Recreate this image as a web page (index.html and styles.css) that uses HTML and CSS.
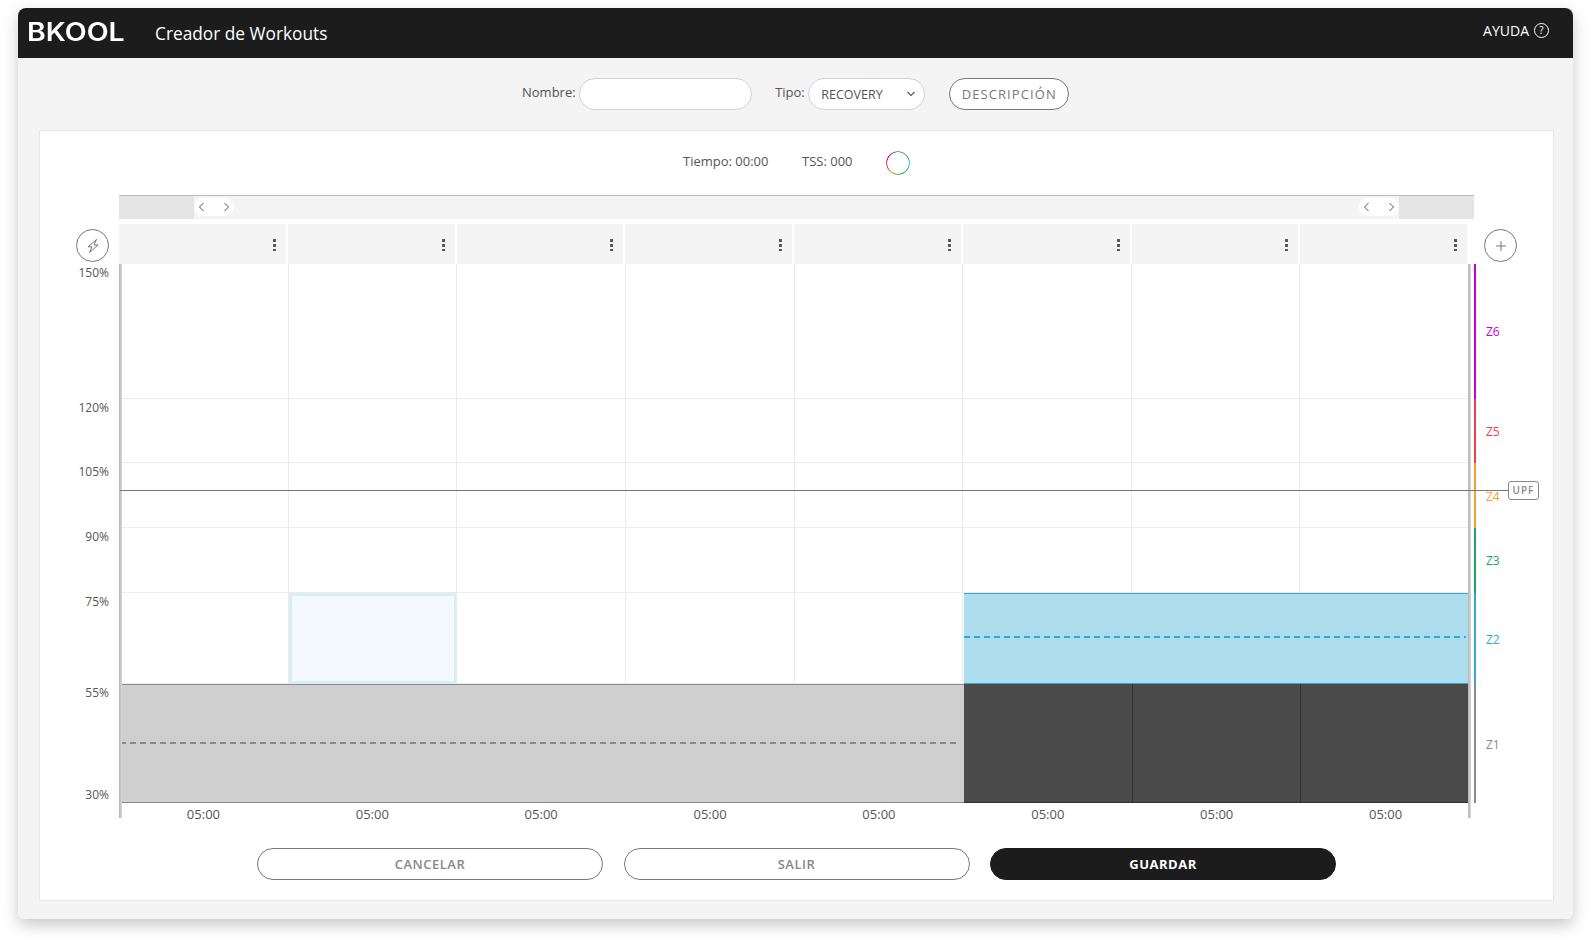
FILE: index.html
```html
<!DOCTYPE html>
<html lang="es">
<head>
  <meta charset="UTF-8">
  <title>Creador de Workouts</title>
  <link rel="stylesheet" href="styles.css">
</head>
<body>

  <div class="window">
    <header class="topbar">
      <span class="logo">BKOOL</span>
      <span class="app-title">Creador de Workouts</span>
      <a class="help">AYUDA <span class="help-icon">?</span></a>
    </header>

    <form class="toolbar">
      <label class="field-label" for="name">Nombre:</label>
      <input class="name-input" type="text" id="name">
      <label class="field-label type-label" for="type">Tipo:</label>
      <div class="type-select" id="type">
        RECOVERY
        <svg width="10" height="6" viewBox="0 0 10 6"><path d="M1.5 1 5 4.5 8.5 1" fill="none" stroke="#555" stroke-width="1.1"/></svg>
      </div>
      <button class="desc-btn" type="button">DESCRIPCIÓN</button>
    </form>

    <main class="card">
      <div class="stats">
        <span>Tiempo: 00:00</span>
        <span class="tss">TSS: 000</span>
        <span class="ring"></span>
      </div>

      <div class="scroller">
        <div class="scroll-window">
          <span class="handle handle-left">
            <svg width="7" height="10" viewBox="0 0 7 10"><path d="M5.5 1 1.5 5l4 4" fill="none" stroke="#555" stroke-width="1"/></svg>
            <svg width="7" height="10" viewBox="0 0 7 10"><path d="M1.5 1l4 4-4 4" fill="none" stroke="#555" stroke-width="1"/></svg>
          </span>
          <span class="handle handle-right">
            <svg width="7" height="10" viewBox="0 0 7 10"><path d="M5.5 1 1.5 5l4 4" fill="none" stroke="#555" stroke-width="1"/></svg>
            <svg width="7" height="10" viewBox="0 0 7 10"><path d="M1.5 1l4 4-4 4" fill="none" stroke="#555" stroke-width="1"/></svg>
          </span>
        </div>
      </div>

      <div class="head-row">
        <div class="gutter">
          <button class="round-btn" type="button">
            <svg width="18" height="18" viewBox="0 0 18 18"><path d="M12.5 2.5 4 9.8h4L5.5 15.5 14 8h-4z" fill="none" stroke="#777" stroke-width="1"/></svg>
          </button>
        </div>
        <div class="col-heads">
          <div class="col-head"><span class="dots"></span></div>
          <div class="col-head"><span class="dots"></span></div>
          <div class="col-head"><span class="dots"></span></div>
          <div class="col-head"><span class="dots"></span></div>
          <div class="col-head"><span class="dots"></span></div>
          <div class="col-head"><span class="dots"></span></div>
          <div class="col-head"><span class="dots"></span></div>
          <div class="col-head"><span class="dots"></span></div>
        </div>
        <button class="round-btn add-btn" type="button">
          <svg width="12" height="12" viewBox="0 0 12 12"><path d="M6 1v10M1 6h10" stroke="#777" stroke-width="1"/></svg>
        </button>
      </div>

      <div class="chart-row">
        <div class="y-labels">
          <span class="y-label">150%</span>
          <span class="y-label">120%</span>
          <span class="y-label">105%</span>
          <span class="y-label">90%</span>
          <span class="y-label">75%</span>
          <span class="y-label y-bottom">55%</span>
          <span class="y-label y-bottom y-last">30%</span>
        </div>

        <div class="plot">
          <!-- horizontal lines -->
          <div class="h-line r1"></div>
          <div class="h-line r2"></div>
          <div class="h-line r3"></div>
          <div class="h-line r4"></div>
          <div class="h-line r5"></div>
          <div class="h-line r6"></div>
          <!-- vertical lines -->
          <div class="v-line c1"></div>
          <div class="v-line c2"></div>
          <div class="v-line c3"></div>
          <div class="v-line c4"></div>
          <div class="v-line c5"></div>
          <div class="v-line c6"></div>
          <div class="v-line c7"></div>
          <!-- blocks -->
          <div class="block ghost"></div>
          <div class="block light"><span class="dash dash-gray"></span></div>
          <div class="block blue"><span class="dash dash-blue"></span></div>
          <div class="block dark c6"></div>
          <div class="block dark c7"></div>
          <div class="block dark c8"></div>

          <span class="edge edge-left"></span>
          <span class="edge edge-right"></span>
          <div class="upf-line"><span class="upf-tag">UPF</span></div>
        </div>

        <div class="zones">
          <div class="zone z6">Z6</div>
          <div class="zone z5">Z5</div>
          <div class="zone z4">Z4</div>
          <div class="zone z3">Z3</div>
          <div class="zone z2">Z2</div>
          <div class="zone z1">Z1</div>
        </div>
      </div>

      <div class="times">
        <span>05:00</span><span>05:00</span><span>05:00</span><span>05:00</span>
        <span>05:00</span><span>05:00</span><span>05:00</span><span>05:00</span>
      </div>

      <div class="actions">
        <button class="action-btn" type="button">CANCELAR</button>
        <button class="action-btn" type="button">SALIR</button>
        <button class="action-btn save" type="button">GUARDAR</button>
      </div>
    </main>
  </div>

</body>
</html>
```

FILE: styles.css
```css
* {
  box-sizing: border-box;
}
html, body {
  margin: 0;
  height: 947px;
  overflow: hidden;
  background: #fff;
}
body {
  font-family: "Open Sans", Arial, sans-serif;
  color: #555;
  font-size: 13px;
  padding: 8px 18px 0 18px;
}
button {
  font-family: inherit;
}

.window {
  width: 1555px;
  height: 911px;
  background: #f4f4f4;
  border-radius: 8px 8px 6px 6px;
  box-shadow: 0 6px 16px rgba(0, 0, 0, .22);
}

/* top bar */
.topbar {
  height: 50px;
  background: #1c1c1c;
  border-radius: 8px 8px 0 0;
  color: #fff;
  display: flex;
  align-items: center;
  padding: 0 24px 0 9px;
}
.logo {
  font-family: Inter, Arial, sans-serif;
  font-weight: 600;
  font-size: 25px;
  line-height: 1;
  width: 128px;
  margin-top: -2px;
  transform: scaleX(1.14);
  transform-origin: left center;
}
.app-title {
  font-size: 17.3px;
}
.help {
  margin-left: auto;
  font-size: 14px;
  display: flex;
  align-items: center;
  gap: 5px;
  margin-top: -6px;
}
.help-icon {
  width: 15px;
  height: 15px;
  border: 1px solid #fff;
  border-radius: 50%;
  font-size: 10px;
  line-height: 13px;
  text-align: center;
}

/* name, type, description */
.toolbar {
  height: 72px;
  display: flex;
  align-items: center;
  padding-left: 504px;
}
.field-label {
  margin-right: 3px;
  margin-top: -4px;
}
.name-input {
  width: 173px;
  height: 32px;
  border: 1px solid #d2d2d2;
  border-radius: 16px;
  background: #fff;
}
.type-label {
  margin-left: 23.5px;
  margin-right: 3.5px;
}
.type-select {
  width: 117px;
  height: 32px;
  border: 1px solid #d2d2d2;
  border-radius: 16px;
  background: #fff;
  font-size: 12.5px;
  display: flex;
  align-items: center;
  justify-content: space-between;
  padding: 0 8px 0 12px;
}
.desc-btn {
  width: 120px;
  height: 32px;
  margin-left: 24px;
  border: 1px solid #777;
  border-radius: 16px;
  background: #fff;
  color: #777;
  font-size: 13px;
  letter-spacing: 1.1px;
  padding: 0;
}

/* white card */
.card {
  width: 1515px;
  height: 771px;
  margin-left: 21px;
  background: #fff;
  border: 1px solid #e8e8e8;
}
.stats {
  height: 64px;
  display: flex;
  align-items: center;
  padding-left: 643px;
  padding-bottom: 4px;
}
.tss {
  margin-left: 33.5px;
}
.ring {
  width: 24px;
  height: 24px;
  margin-left: 33.5px;
  margin-top: 4px;
  border-radius: 50%;
  background: conic-gradient(#888 0, #3fb6d8 15% 30%, #19b26b 45%, #f5a033 60%, #ec3f4f 72%, #c800d8 85%, #888 100%);
  -webkit-mask: radial-gradient(circle, transparent 10.5px, #000 11px);
  mask: radial-gradient(circle, transparent 10.5px, #000 11px);
}

/* scroll bar over the chart */
.scroller {
  width: 1355px;
  height: 24px;
  margin-left: 79px;
  background: #e4e4e4;
  border-top: 1px solid #bbb;
  padding-left: 75px;
  padding-right: 75px;
}
.scroll-window {
  height: 100%;
  background: #f4f4f4;
  display: flex;
  justify-content: space-between;
  align-items: center;
  padding-bottom: 1px;
}
.handle {
  width: 40px;
  height: 18px;
  background: #fff;
  border-radius: 9px;
  display: flex;
  align-items: center;
  justify-content: space-between;
  padding: 0 4px;
}

/* column heads */
.head-row {
  display: flex;
  height: 40px;
  margin-top: 5px;
}
.gutter {
  width: 79px;
  padding-left: 36px;
}
.round-btn {
  width: 33px;
  height: 33px;
  margin-top: 5px;
  border: 1px solid #777;
  border-radius: 50%;
  background: #fff;
  padding: 0;
  display: flex;
  align-items: center;
  justify-content: center;
}
.add-btn {
  margin-left: 15px;
}
.col-heads {
  width: 1350px;
  display: grid;
  grid-template-columns: repeat(8, 1fr);
}
.col-head {
  background: #f4f4f4;
  border-right: 2px solid #fff;
  display: flex;
  align-items: center;
  justify-content: flex-end;
  padding-right: 10px;
}
.dots {
  width: 3px;
  height: 13px;
  background: radial-gradient(circle at center, #555 1.4px, transparent 1.6px) 0 0 / 3px 5px repeat-y;
}

/* chart */
.chart-row {
  display: flex;
  height: 539px;
}
.y-labels {
  width: 80px;
  display: grid;
  grid-template-rows: 135px 64px 65px 65px 91px 119px;
  font-size: 12px;
  padding-right: 11px;
  text-align: right;
}
.y-label {
  line-height: 16px;
  padding-top: 1px;
}
.y-bottom {
  grid-row: 6;
  grid-column: 1;
}
.y-last {
  align-self: end;
  padding-top: 0;
}
.plot {
  width: 1349px;
  position: relative;
  display: grid;
  grid-template-columns: repeat(8, 1fr);
  grid-template-rows: 135px 64px 65px 65px 91px 119px;
}
.h-line {
  grid-column: 1 / -1;
  border-bottom: 1px solid #ececec;
}
.r1 { grid-row: 1; }
.r2 { grid-row: 2; }
.r3 { grid-row: 3; }
.r4 { grid-row: 4; }
.r5 { grid-row: 5; }
.r6 { grid-row: 6; }
.v-line {
  grid-row: 1 / -1;
  border-right: 1px solid #ececec;
}
.c1 { grid-column: 1; }
.c2 { grid-column: 2; }
.c3 { grid-column: 3; }
.c4 { grid-column: 4; }
.c5 { grid-column: 5; }
.c6 { grid-column: 6; }
.c7 { grid-column: 7; }
.c8 { grid-column: 8; }

.block {
  display: flex;
  align-items: center;
}
.ghost {
  grid-row: 5;
  grid-column: 2;
  background: #f3f9fc;
  border: 3px solid #d9eef7;
}
.light {
  grid-row: 6;
  grid-column: 1 / 6;
  margin-right: -1px;
  background: #cfcfcf;
  border-top: 1px solid #8a8a8a;
  border-bottom: 1px solid #8a8a8a;
  padding: 0 7px 0 0;
}
.blue {
  grid-row: 5;
  grid-column: 6 / 9;
  margin-left: 1px;
  background: #aedeee;
  border-top: 1px solid #2ea9d8;
  border-bottom: 1px solid #2ea9d8;
  padding: 0 3px 0 0;
}
.dark {
  grid-row: 6;
  background: #4a4a4a;
  border-left: 1px solid #333;
  border-bottom: 1px solid #333;
}
.dark.c6 {
  margin-left: 1px;
  border-left: 0;
}
.dash {
  flex: 1;
  height: 2px;
}
.dash-gray {
  margin-top: -1px;
  background: repeating-linear-gradient(90deg, #8a8a8a 0 6px, transparent 6px 10px);
}
.dash-blue {
  margin-top: -3px;
  background: repeating-linear-gradient(90deg, #2ea9d8 0 6px, transparent 6px 10px);
}

.edge {
  position: absolute;
  top: 0;
  width: 3px;
  height: 554px;
}
.edge-left {
  left: -1px;
  background: linear-gradient(90deg, #b4b4b4, #d8d8d8);
}
.edge-right {
  right: -2px;
  background: linear-gradient(90deg, #b4b4b4, #d8d8d8);
}
.upf-line {
  position: absolute;
  left: 0;
  top: 226px;
  width: 1388px;
  height: 1px;
  background: #777;
}
.upf-tag {
  position: absolute;
  left: 100%;
  top: -9px;
  width: 31px;
  height: 19px;
  border: 1px solid #888;
  border-radius: 3px;
  background: #fff;
  color: #888;
  font-size: 10px;
  font-weight: 600;
  letter-spacing: 1px;
  line-height: 17px;
  text-align: center;
}

/* zones, right of chart */
.zones {
  margin-left: 5px;
  width: 40px;
  display: flex;
  flex-direction: column;
}
.zone {
  border-left: 2px solid;
  padding-left: 10px;
  font-size: 12px;
  display: flex;
  align-items: center;
}
.z6 { height: 135px; color: #c800d8; }
.z5 { height: 64px; color: #ec3f4f; }
.z4 { height: 65px; color: #f5a033; padding-top: 2px; }
.z3 { height: 65px; color: #19a866; }
.z2 { height: 91px; color: #2ea9d8; padding-top: 2px; }
.z1 { height: 119px; color: #8a8a8a; padding-top: 1px; }

/* durations */
.times {
  width: 1351px;
  margin-left: 79px;
  height: 22px;
  display: grid;
  grid-template-columns: repeat(8, 1fr);
  align-items: center;
  text-align: center;
}

/* bottom buttons */
.actions {
  display: flex;
  justify-content: center;
  gap: 20.5px;
  margin-top: 23px;
}
.action-btn {
  width: 346px;
  height: 32px;
  border: 1px solid #777;
  border-radius: 16px;
  background: #fff;
  color: #888;
  font-size: 13px;
  font-weight: 600;
  letter-spacing: .5px;
  padding: 0;
}
.save {
  background: #1c1c1c;
  border-color: #1c1c1c;
  color: #fff;
  font-weight: 700;
}
```
